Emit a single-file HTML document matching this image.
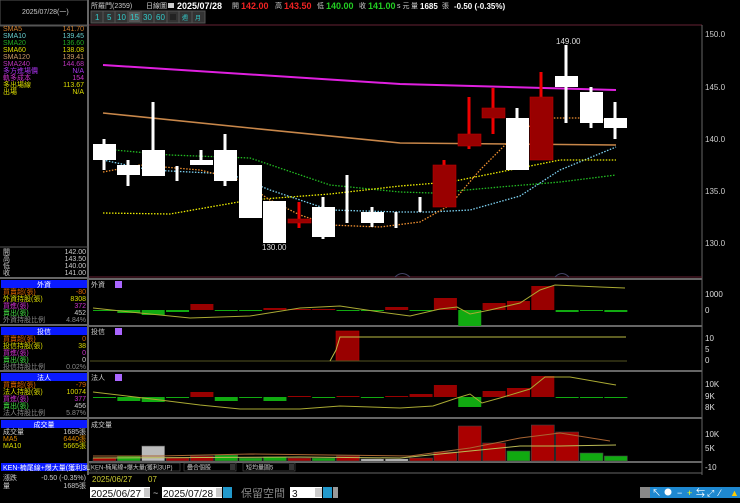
<!DOCTYPE html>
<html><head><meta charset="utf-8">
<style>
*{margin:0;padding:0}
body{width:740px;height:498px;background:#000;overflow:hidden;font-family:"Liberation Sans","Noto Sans CJK TC",sans-serif}
svg text{font-family:"Liberation Sans","Noto Sans CJK TC",sans-serif}
.s{font-size:7px}
</style></head><body>
<svg id="c" width="740" height="498" viewBox="0 0 740 498" xmlns="http://www.w3.org/2000/svg">
<rect width="740" height="498" fill="#000"/>
<rect x="0" y="0" width="88" height="25" fill="#000" stroke="#555" stroke-width="1"/>
<line x1="88" y1="0" x2="88" y2="475" stroke="#666" stroke-width="2"/>
<line x1="0" y1="26" x2="88" y2="26" stroke="#555"/>
<text x="22" y="14" class="s" fill="#ccc">2025/07/28(一)</text>
<g class="s">
<text x="3" y="31" fill="#d08030">SMA5</text><text x="84" y="31" fill="#d08030" text-anchor="end">141.70</text>
<text x="3" y="38" fill="#6cc">SMA10</text><text x="84" y="38" fill="#6cc" text-anchor="end">139.45</text>
<text x="3" y="45" fill="#2a2">SMA20</text><text x="84" y="45" fill="#2a2" text-anchor="end">136.60</text>
<text x="3" y="52" fill="#dd0">SMA60</text><text x="84" y="52" fill="#dd0" text-anchor="end">138.08</text>
<text x="3" y="59" fill="#c96">SMA120</text><text x="84" y="59" fill="#c96" text-anchor="end">139.41</text>
<text x="3" y="66" fill="#b3b">SMA240</text><text x="84" y="66" fill="#b3b" text-anchor="end">144.68</text>
<text x="3" y="73" fill="#a3e">多方進場價</text><text x="84" y="73" fill="#a3e" text-anchor="end">N/A</text>
<text x="3" y="80" fill="#c3c">軌多成本</text><text x="84" y="80" fill="#c3c" text-anchor="end">154</text>
<text x="3" y="87" fill="#dd0">多出場線</text><text x="84" y="87" fill="#dd0" text-anchor="end">113.67</text>
<text x="3" y="94" fill="#dd0">出場</text><text x="84" y="94" fill="#dd0" text-anchor="end">N/A</text>
</g>
<line x1="0" y1="247" x2="88" y2="247" stroke="#555"/>
<g class="s" fill="#ccc">
<text x="3" y="254">開</text><text x="86" y="254" text-anchor="end">142.00</text>
<text x="3" y="261">高</text><text x="86" y="261" text-anchor="end">143.50</text>
<text x="3" y="268">低</text><text x="86" y="268" text-anchor="end">140.00</text>
<text x="3" y="275">收</text><text x="86" y="275" text-anchor="end">141.00</text>
</g>
<line x1="0" y1="278" x2="88" y2="278" stroke="#666" stroke-width="2"/>
<rect x="1" y="280" width="86" height="8" fill="#0a1aff"/><text x="44" y="287" class="s" fill="#fff" text-anchor="middle">外資</text>
<g class="s">
<text x="3" y="294" fill="#d60">買賣超(張)</text><text x="86" y="294" fill="#d60" text-anchor="end">-80</text>
<text x="3" y="301" fill="#dd0">外資持股(張)</text><text x="86" y="301" fill="#dd0" text-anchor="end">8308</text>
<text x="3" y="308" fill="#c3c">買進(張)</text><text x="86" y="308" fill="#c3c" text-anchor="end">372</text>
<text x="3" y="315" fill="#4d4">賣出(張)</text><text x="86" y="315" fill="#ccc" text-anchor="end">452</text>
<text x="3" y="322" fill="#888">外資持股比例</text><text x="86" y="322" fill="#888" text-anchor="end">4.84%</text>
</g>
<line x1="0" y1="325" x2="88" y2="325" stroke="#666" stroke-width="2"/>
<rect x="1" y="327" width="86" height="8" fill="#0a1aff"/><text x="44" y="334" class="s" fill="#fff" text-anchor="middle">投信</text>
<g class="s">
<text x="3" y="341" fill="#d60">買賣超(張)</text><text x="86" y="341" fill="#d60" text-anchor="end">0</text>
<text x="3" y="348" fill="#dd0">投信持股(張)</text><text x="86" y="348" fill="#dd0" text-anchor="end">38</text>
<text x="3" y="355" fill="#c3c">買進(張)</text><text x="86" y="355" fill="#c3c" text-anchor="end">0</text>
<text x="3" y="362" fill="#4d4">賣出(張)</text><text x="86" y="362" fill="#ccc" text-anchor="end">0</text>
<text x="3" y="369" fill="#888">投信持股比例</text><text x="86" y="369" fill="#888" text-anchor="end">0.02%</text>
</g>
<line x1="0" y1="371" x2="88" y2="371" stroke="#666" stroke-width="2"/>
<rect x="1" y="373" width="86" height="8" fill="#0a1aff"/><text x="44" y="380" class="s" fill="#fff" text-anchor="middle">法人</text>
<g class="s">
<text x="3" y="387" fill="#d60">買賣超(張)</text><text x="86" y="387" fill="#d60" text-anchor="end">-79</text>
<text x="3" y="394" fill="#dd0">法人持股(張)</text><text x="86" y="394" fill="#dd0" text-anchor="end">10074</text>
<text x="3" y="401" fill="#c3c">買進(張)</text><text x="86" y="401" fill="#c3c" text-anchor="end">377</text>
<text x="3" y="408" fill="#4d4">賣出(張)</text><text x="86" y="408" fill="#ccc" text-anchor="end">456</text>
<text x="3" y="415" fill="#888">法人持股比例</text><text x="86" y="415" fill="#888" text-anchor="end">5.87%</text>
</g>
<line x1="0" y1="418" x2="88" y2="418" stroke="#666" stroke-width="2"/>
<rect x="1" y="420" width="86" height="8" fill="#0a1aff"/><text x="44" y="427" class="s" fill="#fff" text-anchor="middle">成交量</text>
<g class="s">
<text x="3" y="434" fill="#ccc">成交量</text><text x="86" y="434" fill="#ccc" text-anchor="end">1685張</text>
<text x="3" y="441" fill="#d80">MA5</text><text x="86" y="441" fill="#d80" text-anchor="end">6440張</text>
<text x="3" y="448" fill="#dd0">MA10</text><text x="86" y="448" fill="#dd0" text-anchor="end">5665張</text>
</g>
<rect x="1" y="463" width="86" height="8" fill="#0a1aff"/><text x="3" y="470" class="s" fill="#fff">KEN-楠尾線+爆大量(獲利3UP)</text>
<g class="s" fill="#ccc">
<text x="3" y="480">漲跌</text><text x="86" y="480" text-anchor="end">-0.50 (-0.35%)</text>
<text x="3" y="488">量</text><text x="86" y="488" text-anchor="end">1685張</text>
</g>

<text x="91" y="8" class="s" fill="#ccc">所羅門(2359)</text>
<text x="146" y="8" class="s" fill="#ccc">日線圖</text>
<rect x="168" y="3" width="6" height="5" fill="#ccc"/>
<text x="177" y="9" font-size="9" font-weight="bold" fill="#fff">2025/07/28</text>
<text x="232" y="8" class="s" fill="#ccc">開</text><text x="241" y="9" font-size="9" font-weight="bold" fill="#e22">142.00</text>
<text x="275" y="8" class="s" fill="#ccc">高</text><text x="284" y="9" font-size="9" font-weight="bold" fill="#e22">143.50</text>
<text x="317" y="8" class="s" fill="#ccc">低</text><text x="326" y="9" font-size="9" font-weight="bold" fill="#2c2">140.00</text>
<text x="359" y="8" class="s" fill="#ccc">收</text><text x="368" y="9" font-size="9" font-weight="bold" fill="#2c2">141.00</text>
<text x="397" y="8" class="s" fill="#ccc">s 元</text><text x="411" y="8" class="s" fill="#ccc">量</text>
<text x="420" y="9" font-size="8" font-weight="bold" fill="#fff">1685</text><text x="442" y="8" class="s" fill="#ccc">張</text>
<text x="454" y="9" font-size="8" font-weight="bold" fill="#fff">-0.50 (-0.35%)</text>
<g font-size="8" fill="#3cc">
<rect x="91" y="11" width="114" height="12" fill="#333"/>
<g stroke="#555" fill="none"><rect x="91" y="11" width="12" height="12"/><rect x="103" y="11" width="12" height="12"/><rect x="115" y="11" width="13" height="12"/><rect x="128" y="11" width="13" height="12"/><rect x="141" y="11" width="13" height="12"/><rect x="154" y="11" width="13" height="12"/><rect x="167" y="11" width="12" height="12"/><rect x="179" y="11" width="13" height="12"/><rect x="192" y="11" width="13" height="12"/></g>
<rect x="129" y="12" width="11" height="10" fill="#555"/>
<text x="95" y="20">1</text><text x="107" y="20">5</text><text x="117" y="20">10</text><text x="130" y="20">15</text><text x="143" y="20">30</text><text x="156" y="20">60</text>
<rect x="170" y="14" width="6" height="6" fill="#222"/>
<text x="182" y="20" font-size="6">週</text><text x="195" y="20" font-size="6">月</text>
</g>

<line x1="89" y1="25" x2="702" y2="25" stroke="#623" />
<line x1="702" y1="25" x2="702" y2="475" stroke="#666"/>
<line x1="89" y1="277" x2="702" y2="277" stroke="#623"/>
<line x1="89" y1="279" x2="702" y2="279" stroke="#666" stroke-width="2"/>
<g font-size="8" fill="#ccc">
<text x="705" y="37">150.0</text><text x="705" y="90">145.0</text><text x="705" y="142">140.0</text><text x="705" y="194">135.0</text><text x="705" y="246">130.0</text>
</g>
<polyline points="103,65 400,84 616,90" fill="none" stroke="#e020e0" stroke-width="2"/>
<polyline points="103,113 250,128 400,143 616,145" fill="none" stroke="#c8874a" stroke-width="1.6"/>
<g fill="none" stroke-width="1.3" stroke-dasharray="1.5,1.5">
<polyline points="103,149 170,155 250,158 330,185 400,192 433,193 500,187 560,182 616,175" stroke="#2b2"/>
<polyline points="103,160 150,170 230,174 270,190 330,210 400,212 430,212 470,210 520,196 560,170 616,147" stroke="#7cd0f0"/>
<polyline points="103,213 170,214 250,200 330,194 400,186 450,182 520,168 560,160 616,160" stroke="#ee0"/>
<polyline points="103,172 140,165 200,170 240,180 270,200 300,215 330,225 380,227 420,222 450,205 480,170 500,150 520,130 550,118 580,118 616,121" stroke="#f09030"/>
</g>
<g id="candles"></g>
<text x="262" y="250" font-size="8" fill="#ddd">130.00</text>
<text x="556" y="44" font-size="8" fill="#ddd">149.00</text>
<path d="M395 277 Q402 270 410 277 M555 277 Q562 270 569 277" stroke="#446" fill="none"/>

<line x1="89" y1="326" x2="702" y2="326" stroke="#666" stroke-width="2"/>
<line x1="89" y1="371" x2="702" y2="371" stroke="#666" stroke-width="2"/>
<line x1="89" y1="418" x2="702" y2="418" stroke="#666" stroke-width="2"/>
<line x1="89" y1="462" x2="702" y2="462" stroke="#666" stroke-width="2"/>
<line x1="89" y1="473" x2="702" y2="473" stroke="#666" stroke-width="1"/>
<g font-size="7" fill="#ccc">
<text x="91" y="287">外資</text><text x="91" y="334">投信</text><text x="91" y="380">法人</text><text x="91" y="427">成交量</text>
</g>
<rect x="115" y="281" width="7" height="7" fill="#a6f"/><rect x="115" y="328" width="7" height="7" fill="#a6f"/><rect x="115" y="374" width="7" height="7" fill="#a6f"/>
<g font-size="8" fill="#ddd">
<text x="705" y="297">1000</text><text x="705" y="313">0</text>
<text x="705" y="341">10</text><text x="705" y="352">5</text><text x="705" y="363">0</text>
<text x="705" y="387">10K</text><text x="705" y="399">9K</text><text x="705" y="410">8K</text>
<text x="705" y="437">10K</text><text x="705" y="451">5K</text>
<text x="705" y="470">-10</text>
</g>
<g id="bars"></g>
<polyline points="93,308 140,313 190,318 250,316 300,308 340,306 380,312 410,316 440,309 457,307 470,314 490,310 520,303 540,290 555,285 600,287 625,288" fill="none" stroke="#aa3" stroke-width="1"/>
<line x1="90" y1="361" x2="627" y2="361" stroke="#552"/>
<polyline points="330,361 336,350 340,337 626,337" fill="none" stroke="#bb4"/>
<polyline points="93,392 160,400 200,405 240,409 300,409 340,406 400,408 433,406 457,398 470,394 482,403 500,398 530,389 545,377 570,377 610,384 616,385" fill="none" stroke="#aa3"/>
<polyline points="93,456 160,456 250,454 330,455 410,456 470,448 520,438 560,433 610,441" fill="none" stroke="#a63"/>
<polyline points="93,458 300,457 400,458 460,452 520,446 560,446 616,445" fill="none" stroke="#bb5"/>

<rect x="90" y="463" width="90" height="8" fill="#000" stroke="#555" stroke-width="0.6"/>
<text x="91" y="469.5" font-size="6" fill="#ccc">KEN-楠尾線+爆大量(獲利3UP)</text>
<rect x="184" y="463" width="52" height="8" fill="#000" stroke="#555" stroke-width="0.6"/><text x="187" y="469.5" font-size="6" fill="#ccc">疊合個股</text><rect x="230" y="464" width="5" height="6" fill="#333"/>
<rect x="243" y="463" width="52" height="8" fill="#000" stroke="#555" stroke-width="0.6"/><text x="246" y="469.5" font-size="6" fill="#ccc">短均量圖5</text><rect x="289" y="464" width="5" height="6" fill="#333"/>
<text x="92" y="482" font-size="8" fill="#cc3">2025/06/27</text><text x="148" y="482" font-size="8" fill="#cc3">07</text>
<rect x="90" y="487" width="60" height="11" fill="#fff"/><text x="91" y="497" font-size="10" fill="#111">2025/06/27</text><rect x="144" y="488" width="6" height="9" fill="#ccc"/>
<text x="153" y="496" font-size="9" fill="#ccc">~</text>
<rect x="162" y="487" width="60" height="11" fill="#fff"/><text x="163" y="497" font-size="10" fill="#111">2025/07/28</text><rect x="216" y="488" width="6" height="9" fill="#ccc"/>
<rect x="223" y="487" width="9" height="11" fill="#29c"/>
<text x="241" y="497" font-size="11" fill="#888">保留空間</text>
<rect x="290" y="487" width="32" height="11" fill="#fff"/><text x="292" y="497" font-size="10" fill="#111">3</text><rect x="315" y="488" width="7" height="9" fill="#ccc"/>
<rect x="323" y="487" width="9" height="11" fill="#29c"/><rect x="333" y="487" width="5" height="11" fill="#999"/>
<rect x="640" y="487" width="100" height="11" fill="#1e88d0"/><rect x="640" y="487" width="10" height="11" fill="#888"/>
<g fill="#fff" font-size="9"><text x="652" y="496">↖</text><circle cx="668" cy="492" r="3.5"/><text x="677" y="496">−</text><text x="687" y="496" fill="#ff0">+</text><text x="696" y="496">⇆</text><text x="707" y="496">⤢</text><text x="719" y="496">⁄</text><text x="730" y="496" fill="#fc0">▲</text></g>
</svg>
<script>
var ns="http://www.w3.org/2000/svg";
function R(g,x,y,w,h,f,s){var r=document.createElementNS(ns,"rect");r.setAttribute("x",x);r.setAttribute("y",y);r.setAttribute("width",w);r.setAttribute("height",Math.max(h,1));r.setAttribute("fill",f);if(s){r.setAttribute("stroke",s);r.setAttribute("stroke-width",0.6);}document.getElementById(g).appendChild(r);}
var C=[[93,144,160,139,170,'w'],[117,165,175,160,186,'w'],[142,150,176,102,176,'w'],[166,166,181,166,181,'t'],[190,160,165,150,165,'w'],[214,150,181,134,186,'w'],[239,165,218,165,218,'w'],[263,201,243,201,243,'w'],[288,219,223,202,228,'r'],[312,207,237,197,239,'w'],[336,175,223,175,223,'t'],[361,212,223,207,227,'w'],[385,212,228,212,228,'t'],[409,197,212,197,212,'t'],[433,165,207,160,207,'r'],[458,134,146,97,149,'r'],[482,108,118,88,134,'r'],[506,118,170,108,170,'w'],[530,97,160,72,160,'r'],[555,76,87,45,123,'w'],[580,92,123,87,128,'w'],[604,118,128,102,139,'w']];
C.forEach(function(c){var x=c[0],cx=x+11;
 if(c[5]=='t'){R('candles',cx-1.5,c[3],3,c[4]-c[3],'#fff');return;}
 var wc=c[5]=='w'?'#fff':'#e00';
 R('candles',cx-1.5,c[3],3,c[4]-c[3],wc);
 R('candles',x,c[1],23,c[2]-c[1],c[5]=='w'?'#fff':'#900',c[5]=='w'?null:'#b00');});
var V=[[458,'r'],[456,'g'],[446,'s'],[458,'r'],[456,'r'],[455,'g'],[458,'g'],[457,'g'],[458,'r'],[458,'g'],[456,'r'],[459,'w'],[459,'w'],[458,'r'],[452,'r'],[426,'r'],[443,'r'],[451,'g'],[425,'r'],[432,'r'],[453,'g'],[456,'g']];
var col={r:'#a00',g:'#1a1',s:'#bbb',w:'#ddd'};
V.forEach(function(v,i){var x=93+i*24.35;R('bars',x,v[0],23,461-v[0],col[v[1]],'#444');});
var F=[1,3,5,2,-6,1,0,-2,-1,-1,0,0,-3,0,-12,16,-7,-9,-24,2,1,2];
F.forEach(function(v,i){var x=93+i*24.35;var y=v<0?310+v:310;R('bars',x,y,23,Math.abs(v)||1,v<0?'#900':'#1a1');});
var L=[1,4,5,1,-5,4,1,4,-1,1,-1,0,-1,-3,-12,10,-6,-9,-21,1,1,1];
L.forEach(function(v,i){var x=93+i*24.35;var y=v<0?397+v:397;R('bars',x,y,23,Math.abs(v)||1,v<0?'#900':'#1a1');});
R('bars',336,331,23,30,'#900','#b00');
</script>
</body></html>
